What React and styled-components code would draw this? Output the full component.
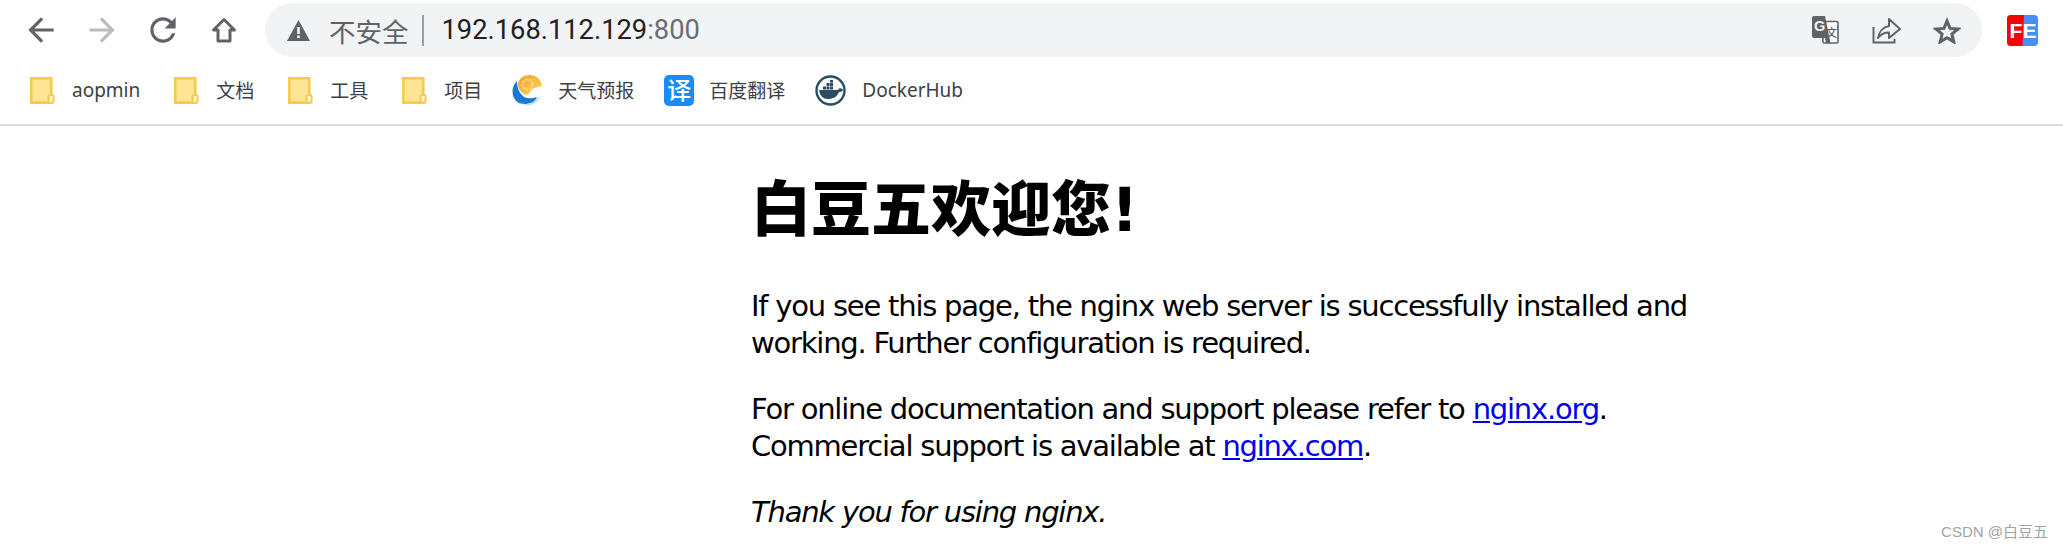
import React from 'react'
import styled, { createGlobalStyle } from 'styled-components'

// ----------------------------------------------------------------------------

const GlobalStyle = createGlobalStyle`
  html, body {
    margin: 0;
    padding: 0;
    background: #fff;
  }
  body {
    overflow: hidden;
  }
`

const UI_FONT = '"Roboto", "Noto Sans CJK SC", sans-serif'
const CJK_FONT = '"Noto Sans", "Noto Sans CJK SC", sans-serif'

const Page = styled.div`
  width: 2063px;
  height: 548px;
  position: relative;
  overflow: hidden;
`

// ----------------------------------------------------------------------------

const Toolbar = styled.div`
  display: flex;
  align-items: center;
  height: 62px;
  padding: 0 25px 2px 10px;
  box-sizing: border-box;
`

const NavButton = styled.div`
  width: 61px;
  display: flex;
  justify-content: center;
  align-items: center;
  color: ${(p) => (p.$disabled ? '#b9bcc0' : '#5f6368')};
`

const AddressBar = styled.div`
  flex: 1;
  height: 54px;
  margin: 0 25px 0 11px;
  padding: 0 21px 0 22px;
  border-radius: 27px;
  background: #f1f3f4;
  display: flex;
  align-items: center;
  font-family: ${UI_FONT};
`

const Security = styled.span`
  margin-left: 19px;
  font-size: 26.5px;
  color: #5f6368;
`

const Divider = styled.span`
  width: 2px;
  height: 31px;
  margin: 0 18px 0 13px;
  background: #9aa0a6;
`

const Url = styled.span`
  font-size: 27.3px;
  color: #202124;
`

const Port = styled.span`
  color: #6a6e73;
`

const BarActions = styled.div`
  margin-left: auto;
  display: flex;
  align-items: center;
  gap: 32px;
  color: #5f6368;
`

// ----------------------------------------------------------------------------

const BookmarkBar = styled.div`
  display: flex;
  align-items: center;
  height: 64px;
  padding: 0 0 6px 30px;
  box-sizing: border-box;
  border-bottom: 2px solid #dadada;
  gap: 30px;
  font-family: ${CJK_FONT};
  font-size: 19px;
  color: #3c4043;
`

const FolderGroup = styled.div`
  display: flex;
  align-items: center;
  gap: 34px;
`

const Bookmark = styled.div`
  display: flex;
  align-items: center;
  gap: ${(p) => p.$gap || 16}px;
`

const TranslateBadge = styled.span`
  width: 30px;
  height: 31px;
  border-radius: 5px;
  background: #1a8cf5;
  color: #fff;
  font-size: 24px;
  font-weight: 500;
  line-height: 30px;
  text-align: center;
`

// ----------------------------------------------------------------------------

const Main = styled.main`
  padding-left: 751px;
  width: 990px;
  color: #000;
  font-family: "DejaVu Sans", "Noto Sans CJK SC", sans-serif;
  font-size: 29px;
  letter-spacing: -1.22px;
  line-height: 37px;
`

const Title = styled.h1`
  margin: 49px 0 43px;
  font-family: "DejaVu Sans", "Noto Sans CJK SC", sans-serif;
  font-size: 60px;
  font-weight: 900;
  letter-spacing: 0;
  line-height: 70px;
`

const Para = styled.p`
  margin: 0 0 29px;
`

const Link = styled.a`
  color: #0000ee;
  text-decoration: underline;
`

const Watermark = styled.div`
  position: absolute;
  right: 15px;
  bottom: 7px;
  font-family: "Liberation Sans", "Noto Sans CJK SC", sans-serif;
  font-size: 15px;
  color: #a3a3a3;
`

// ----------------------------------------------------------------------------

const BackIcon = () => (
  <svg width="38" height="38" viewBox="0 0 24 24" fill="currentColor">
    <path d="M20 11H7.83l5.59-5.59L12 4l-8 8 8 8 1.41-1.41L7.83 13H20v-2z" />
  </svg>
)

const ForwardIcon = () => (
  <svg width="38" height="38" viewBox="0 0 24 24" fill="currentColor">
    <path d="M12 4l-1.41 1.41L16.17 11H4v2h12.17l-5.58 5.59L12 20l8-8z" />
  </svg>
)

const ReloadIcon = () => (
  <svg width="38" height="38" viewBox="0 0 24 24" fill="currentColor">
    <path d="M17.65 6.35C16.2 4.9 14.21 4 12 4c-4.42 0-7.99 3.58-7.99 8s3.57 8 7.99 8c3.73 0 6.84-2.55 7.73-6h-2.08c-.82 2.33-3.04 4-5.65 4-3.31 0-6-2.69-6-6s2.69-6 6-6c1.66 0 3.14.69 4.22 1.78L13 11h7V4l-2.35 2.35z" />
  </svg>
)

const HomeIcon = () => (
  <svg width="28" height="28" viewBox="0 0 28 28" fill="none" stroke="currentColor" strokeWidth="3">
    <path d="M14 3.5 3.5 14H8v11h12V14h4.5z" strokeLinejoin="round" />
  </svg>
)

const WarningIcon = () => (
  <svg width="23" height="21" viewBox="0 0 23 21">
    <path d="M11.5 0 23 21H0z" fill="#5f6368" />
    <rect x="10.2" y="7" width="2.6" height="7" fill="#f1f3f4" />
    <rect x="10.2" y="15.5" width="2.6" height="2.6" fill="#f1f3f4" />
  </svg>
)

const TranslateIcon = () => (
  <svg width="27" height="28" viewBox="0 0 27 28">
    <rect x="11" y="5.500" width="15" height="21.500" rx="1.500" fill="#fff" stroke="#5f6368" strokeWidth="1.600" />
    <path d="M2 0h11l5.500 27H14l-1-5H2a2 2 0 0 1-2-2V2a2 2 0 0 1 2-2z" fill="#5f6368" />
    <text x="2" y="15" fontFamily="Liberation Sans" fontSize="14.500" fontWeight="700" fill="#f1f3f4">G</text>
    <text x="14" y="21" fontFamily="Noto Sans CJK SC" fontSize="11" fontWeight="500" fill="#5f6368">文</text>
  </svg>
)

const ShareIcon = () => (
  <svg width="30" height="27" viewBox="0 0 30 27" fill="none" stroke="currentColor" strokeWidth="2">
    <path d="M2.500 10v15.500h21V22" />
    <path d="M18 2l11 10-11 9v-5.500c-5 0-8 1.500-11 5.500 1-6 5-11 11-12z" strokeLinejoin="round" />
  </svg>
)

const StarIcon = () => (
  <svg width="28" height="27" viewBox="0 0 28 27" fill="none" stroke="currentColor" strokeWidth="3">
    <path d="M14 4l3 7.4 8 .6-6.100 5.100 1.900 7.800L14 20.700l-6.800 4.200 1.900-7.800L3 12l8-.6z" strokeLinejoin="miter" />
  </svg>
)

const FeLogo = () => (
  <svg width="31" height="31" viewBox="0 0 31 31">
    <rect width="31" height="31" rx="4" fill="#4a8ef5" />
    <path d="M4 0h13l-1.500 31H4a4 4 0 0 1-4-4V4a4 4 0 0 1 4-4z" fill="#f10505" />
    <text
      x="2.500"
      y="23"
      fontFamily="Liberation Sans"
      fontSize="19.500"
      fontWeight="700"
      fill="#fff"
      textLength="27"
      lengthAdjust="spacingAndGlyphs"
    >
      FE
    </text>
  </svg>
)

const FolderIcon = () => (
  <svg width="25" height="27" viewBox="0 0 25 27">
    <rect x="1.300" y="1.300" width="20" height="24.400" fill="#fee593" stroke="#f4cb4f" strokeWidth="2.600" />
    <rect x="18.600" y="18" width="5" height="7.700" rx="1.500" fill="#fff6d8" stroke="#f4cb4f" strokeWidth="2" />
  </svg>
)

const WeatherIcon = () => (
  <svg width="30" height="31" viewBox="0 0 30 31">
    <defs>
      <linearGradient id="sun" x1="0" y1="0" x2="1" y2="1">
        <stop offset="0" stopColor="#f6a02e" />
        <stop offset="1" stopColor="#fcd657" />
      </linearGradient>
    </defs>
    <path d="M18 0c7 0 11 5 12 11l-8 2c-3 2-4 5-7 7-5-1-9-6-9-10C6 4 11 0 18 0z" fill="url(#sun)" />
    <circle cx="15.500" cy="9.500" r="5" fill="none" stroke="#fde3a4" strokeWidth="2" strokeDasharray="2 1.500" />
    <path d="M5 6C-3 13 0 29 12 29c6 0 11-2 13-7-6 2-12 2-15-2C7 17 5 12 5 6z" fill="#1b79d6" />
    <path d="M8 27c5 4 12 3 17-3 3-2 3-2 4-3-4 8-15 13-21 6z" fill="#a6dbf5" />
  </svg>
)

const DockerIcon = () => (
  <svg width="31" height="31" viewBox="0 0 31 31">
    <circle cx="15.500" cy="15.500" r="14" fill="#fff" stroke="#2a4d63" strokeWidth="2.400" />
    <path d="M4 15h19c1-2 3-2 4-1 1 0 1 1 1 1-1 2-3 2-4 2-2 5-6 7-11 7-5 0-8-3-9-9z" fill="#2a4d63" />
    <rect x="8" y="11.500" width="3" height="3" fill="#2a4d63" />
    <rect x="11.500" y="11.500" width="3" height="3" fill="#2a4d63" />
    <rect x="15" y="11.500" width="3" height="3" fill="#2a4d63" />
    <rect x="11.500" y="8" width="3" height="3" fill="#2a4d63" />
    <rect x="15" y="8" width="3" height="3" fill="#2a4d63" />
    <rect x="15" y="5" width="3" height="2.500" fill="#2a4d63" />
  </svg>
)

// ----------------------------------------------------------------------------

const folders = ['aopmin', '文档', '工具', '项目']

const App = () => (
  <Page>
    <GlobalStyle />
    <Toolbar>
      <NavButton><BackIcon /></NavButton>
      <NavButton $disabled><ForwardIcon /></NavButton>
      <NavButton><ReloadIcon /></NavButton>
      <NavButton><HomeIcon /></NavButton>
      <AddressBar>
        <WarningIcon />
        <Security>不安全</Security>
        <Divider />
        <Url>192.168.112.129<Port>:800</Port></Url>
        <BarActions>
          <TranslateIcon />
          <ShareIcon />
          <StarIcon />
        </BarActions>
      </AddressBar>
      <FeLogo />
    </Toolbar>
    <BookmarkBar>
      <FolderGroup>
        {folders.map((name) => (
          <Bookmark key={name} $gap={17}>
            <FolderIcon />
            <span>{name}</span>
          </Bookmark>
        ))}
      </FolderGroup>
      <Bookmark><WeatherIcon /><span>天气预报</span></Bookmark>
      <Bookmark $gap={15}><TranslateBadge>译</TranslateBadge><span>百度翻译</span></Bookmark>
      <Bookmark><DockerIcon /><span>DockerHub</span></Bookmark>
    </BookmarkBar>
    <Main>
      <Title>白豆五欢迎您!</Title>
      <Para>
        If you see this page, the nginx web server is successfully installed and working. Further configuration is required.
      </Para>
      <Para>
        For online documentation and support please refer to <Link href="#">nginx.org</Link>.<br />
        Commercial support is available at <Link href="#">nginx.com</Link>.
      </Para>
      <Para><em>Thank you for using nginx.</em></Para>
    </Main>
    <Watermark>CSDN @白豆五</Watermark>
  </Page>
)

export default App
